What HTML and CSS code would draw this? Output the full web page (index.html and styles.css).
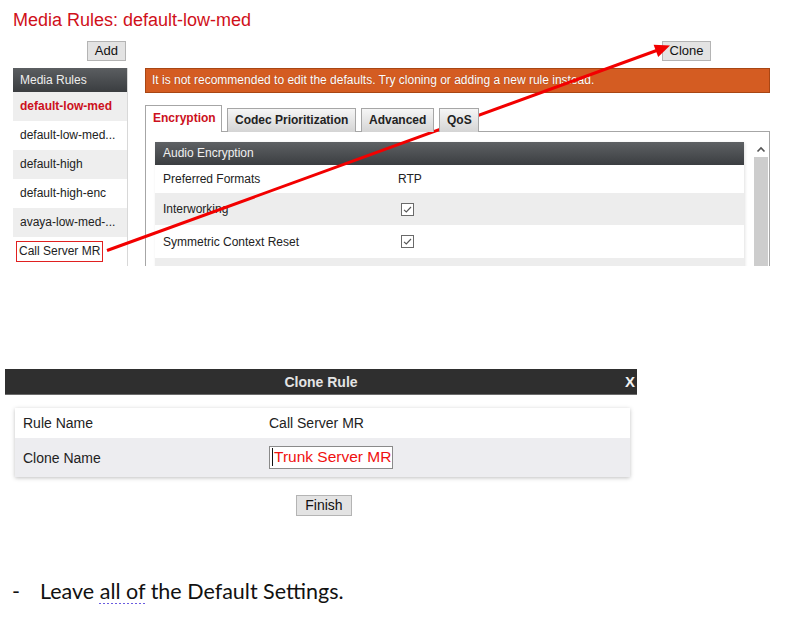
FILE: index.html
```html
<!DOCTYPE html>
<html>
<head>
<meta charset="utf-8">
<link rel="stylesheet" href="styles.css">
</head>
<body>
<div class="page">
  <section class="shot">
    <h1 class="title">Media Rules: default-low-med</h1>
    <div class="workspace">
      <div class="btn-cell left"><button class="btn">Add</button></div>
      <div class="btn-cell right"><button class="btn clone">Clone</button></div>
      <nav class="sidebar">
        <div class="side-head">Media Rules</div>
        <div class="side-item alt active">default-low-med</div>
        <div class="side-item">default-low-med...</div>
        <div class="side-item alt">default-high</div>
        <div class="side-item">default-high-enc</div>
        <div class="side-item alt">avaya-low-med-...</div>
        <div class="side-item"><span class="boxed">Call Server MR</span></div>
      </nav>
      <div class="main">
        <div class="banner">It is not recommended to edit the defaults. Try cloning or adding a new rule instead.</div>
        <div class="tabs">
          <div class="tab active">Encryption</div>
          <div class="tab t-codec">Codec Prioritization</div>
          <div class="tab t-adv">Advanced</div>
          <div class="tab t-qos">QoS</div>
        </div>
        <div class="panel">
          <div class="table">
            <div class="thead">Audio Encryption</div>
            <div class="trow r1"><span class="lbl">Preferred Formats</span><span class="val">RTP</span></div>
            <div class="trow r2 alt"><span class="lbl">Interworking</span><span class="val"><svg class="chk" width="13" height="13" viewBox="0 0 13 13"><rect x="0.5" y="0.5" width="12" height="12" fill="#fff" stroke="#6a6a6a"/><polyline points="3,6.8 5.3,9 10,4" fill="none" stroke="#555" stroke-width="1.1"/></svg></span></div>
            <div class="trow r3"><span class="lbl">Symmetric Context Reset</span><span class="val"><svg class="chk" width="13" height="13" viewBox="0 0 13 13"><rect x="0.5" y="0.5" width="12" height="12" fill="#fff" stroke="#6a6a6a"/><polyline points="3,6.8 5.3,9 10,4" fill="none" stroke="#555" stroke-width="1.1"/></svg></span></div>
            <div class="trow r4 alt"></div>
          </div>
          <div class="scrollbar">
            <div class="sb-btn"><svg width="10" height="7" viewBox="0 0 10 7"><polyline points="1.5,5.5 5,2 8.5,5.5" fill="none" stroke="#555" stroke-width="1.6"/></svg></div>
            <div class="sb-track"></div>
          </div>
        </div>
      </div>
    </div>
    <svg class="arrow" width="790" height="266" viewBox="0 0 790 266">
      <line x1="107" y1="250.5" x2="658" y2="50" stroke="#f20000" stroke-width="3"/>
      <polygon points="670,45.5 653.6,44.8 658.2,57" fill="#f20000"/>
    </svg>
  </section>

  <section class="dialog">
    <div class="dlg-bar"><span class="dlg-title">Clone Rule</span><span class="dlg-x">X</span></div>
    <div class="dlg-body">
      <div class="card">
        <div class="crow first"><span class="clbl">Rule Name</span><span class="cval">Call Server MR</span></div>
        <div class="crow second"><span class="clbl">Clone Name</span><span class="cval"><span class="input"><span class="caret"></span>Trunk Server MR</span></span></div>
      </div>
      <div class="finish-row"><button class="btn finish">Finish</button></div>
    </div>
  </section>

  <p class="note"><span class="dash">-</span><span>Leave <span class="squig">all of</span> the Default Settings.</span></p>
</div>
</body>
</html>
```

FILE: styles.css
```css
html, body {
  margin: 0;
  padding: 0;
  background: #fff;
}
.page {
  position: relative;
  width: 790px;
  font-family: "Liberation Sans", Arial, sans-serif;
  color: #222;
}
.shot {
  position: relative;
  height: 266px;
  overflow: hidden;
}
.title {
  margin: 0;
  padding: 9px 0 0 13px;
  font-size: 18px;
  line-height: 22px;
  font-weight: normal;
  color: #d0101a;
}
.workspace {
  display: grid;
  grid-template-columns: 114px 625px;
  column-gap: 18px;
  row-gap: 7px;
  margin: 10px 0 0 13px;
}
.btn-cell {
  display: flex;
  height: 20px;
}
.btn-cell.left { justify-content: flex-end; padding-right: 1px; }
.btn-cell.right { justify-content: flex-end; padding-right: 59px; }
.btn {
  font-family: "Liberation Sans", Arial, sans-serif;
  font-size: 13px;
  color: #111;
  background: #e3e3e3;
  border: 1px solid #b4b4b4;
  height: 20px;
  padding: 0 7px;
  margin: 0;
  line-height: 18px;
}
.btn.clone { width: 49px; padding: 0; }
.sidebar {
  display: flex;
  flex-direction: column;
  font-size: 12px;
  box-shadow: 1px 0 0 #d8d8d8;
}
.side-head {
  height: 24px;
  line-height: 24px;
  padding-left: 7px;
  color: #eee;
  background: linear-gradient(#5b5e61, #3a3d40);
  font-size: 12px;
}
.side-item {
  height: 29px;
  line-height: 29px;
  padding-left: 7px;
  background: #fff;
  white-space: nowrap;
}
.side-item.alt { background: #eeeeee; }
.side-item.active { color: #cc1020; font-weight: bold; }
.boxed {
  display: inline-block;
  border: 1.5px solid #e02020;
  line-height: 19px;
  padding: 0 2px;
  margin-left: -4px;
}
.main {
  display: flex;
  flex-direction: column;
}
.banner {
  height: 23px;
  line-height: 23px;
  background: #d45c22;
  border: 1px solid #a84614;
  color: #fff;
  font-size: 12px;
  padding-left: 6px;
  text-shadow: 0 0 1px rgba(80,20,0,0.4);
}
.tabs {
  display: flex;
  align-items: flex-end;
  gap: 5px;
  margin-top: 12px;
  height: 27px;
  position: relative;
  z-index: 1;
}
.tab {
  box-sizing: border-box;
  height: 24px;
  line-height: 23px;
  padding: 0 0 0 7px;
  font-size: 12px;
  font-weight: bold;
  color: #222;
  white-space: nowrap;
  background: linear-gradient(#f6f6f6, #d4d4d4);
  border: 1px solid #a6a6a6;
  border-bottom: none;
  flex: none;
}
.tab.active {
  height: 27px;
  line-height: 25px;
  background: #fff;
  color: #cc1020;
  width: 77px;
}
.tab.t-codec { width: 129px; }
.tab.t-adv { width: 73px; }
.tab.t-qos { width: 40px; }
.panel {
  display: flex;
  border: 1px solid #a6a6a6;
  margin-top: -1px;
  height: 160px;
  padding: 10px 1px 0 9px;
  gap: 10px;
  background: #fff;
}
.table {
  width: 589px;
  display: flex;
  flex-direction: column;
  box-shadow: 1px 1px 3px rgba(0,0,0,0.12);
}
.thead {
  height: 23px;
  line-height: 23px;
  padding-left: 8px;
  font-size: 12px;
  color: #f0f0f0;
  background: linear-gradient(#5e6164, #3b3e41);
}
.trow {
  display: flex;
  align-items: center;
  font-size: 12px;
  background: #fff;
}
.trow.alt { background: #ededed; }
.r1 { height: 28px; }
.r2 { height: 32px; }
.r3 { height: 33px; }
.r4 { height: 30px; }
.lbl {
  width: 235px;
  padding-left: 8px;
}
.val {
  display: flex;
  align-items: center;
}
.chk { margin-left: 3px; display: block; }
.scrollbar {
  width: 14px;
  display: flex;
  flex-direction: column;
}
.sb-btn {
  height: 15px;
  display: flex;
  align-items: center;
  justify-content: center;
  background: #fff;
}
.sb-track {
  flex: 1;
  background: #cdcdcd;
}
.arrow {
  position: absolute;
  left: 0;
  top: 0;
  pointer-events: none;
}
.dialog {
  margin: 103px 0 0 5px;
  width: 632px;
}
.dlg-bar {
  position: relative;
  height: 26px;
  background: #2f2f2f;
  border-bottom: 1px solid #6b6b6b;
  box-sizing: border-box;
  display: flex;
  align-items: center;
  justify-content: center;
}
.dlg-title {
  color: #e4e4e4;
  font-weight: bold;
  font-size: 14px;
}
.dlg-x {
  position: absolute;
  right: 2px;
  top: 4px;
  color: #f2f2f2;
  font-weight: bold;
  font-size: 15px;
}
.dlg-body {
  padding: 13px 7px 0 10px;
}
.card {
  display: flex;
  flex-direction: column;
  box-shadow: 0 1px 4px rgba(0,0,0,0.25);
}
.crow {
  display: flex;
  align-items: center;
  font-size: 14px;
  color: #222;
}
.crow.first { height: 30px; background: #fff; }
.crow.second { height: 39px; background: #ededf0; }
.clbl {
  width: 246px;
  padding-left: 8px;
}
.input {
  display: inline-flex;
  align-items: center;
  height: 23px;
  box-sizing: border-box;
  border: 1px solid #8a8a8a;
  background: #fff;
  color: #f01010;
  font-size: 15.5px;
  padding: 0 1px 0 2px;
  white-space: nowrap;
}
.caret {
  display: inline-block;
  width: 1px;
  height: 18px;
  background: #111;
  margin-right: 1px;
}
.finish-row {
  display: flex;
  justify-content: center;
  margin-top: 18px;
  padding-left: 3px;
}
.btn.finish {
  font-size: 14px;
  width: 56px;
  height: 21px;
  padding: 0;
  line-height: 19px;
}
.note {
  display: flex;
  margin: 62px 0 0 0;
  padding-left: 12px;
  font-family: Lato, "Open Sans", sans-serif;
  font-size: 21.5px;
  line-height: 26px;
  color: #111;
}
.dash {
  width: 28px;
}
.squig {
  text-decoration: underline dotted #6a5ce0;
  text-decoration-thickness: 2px;
  text-underline-offset: 4px;
}
```
